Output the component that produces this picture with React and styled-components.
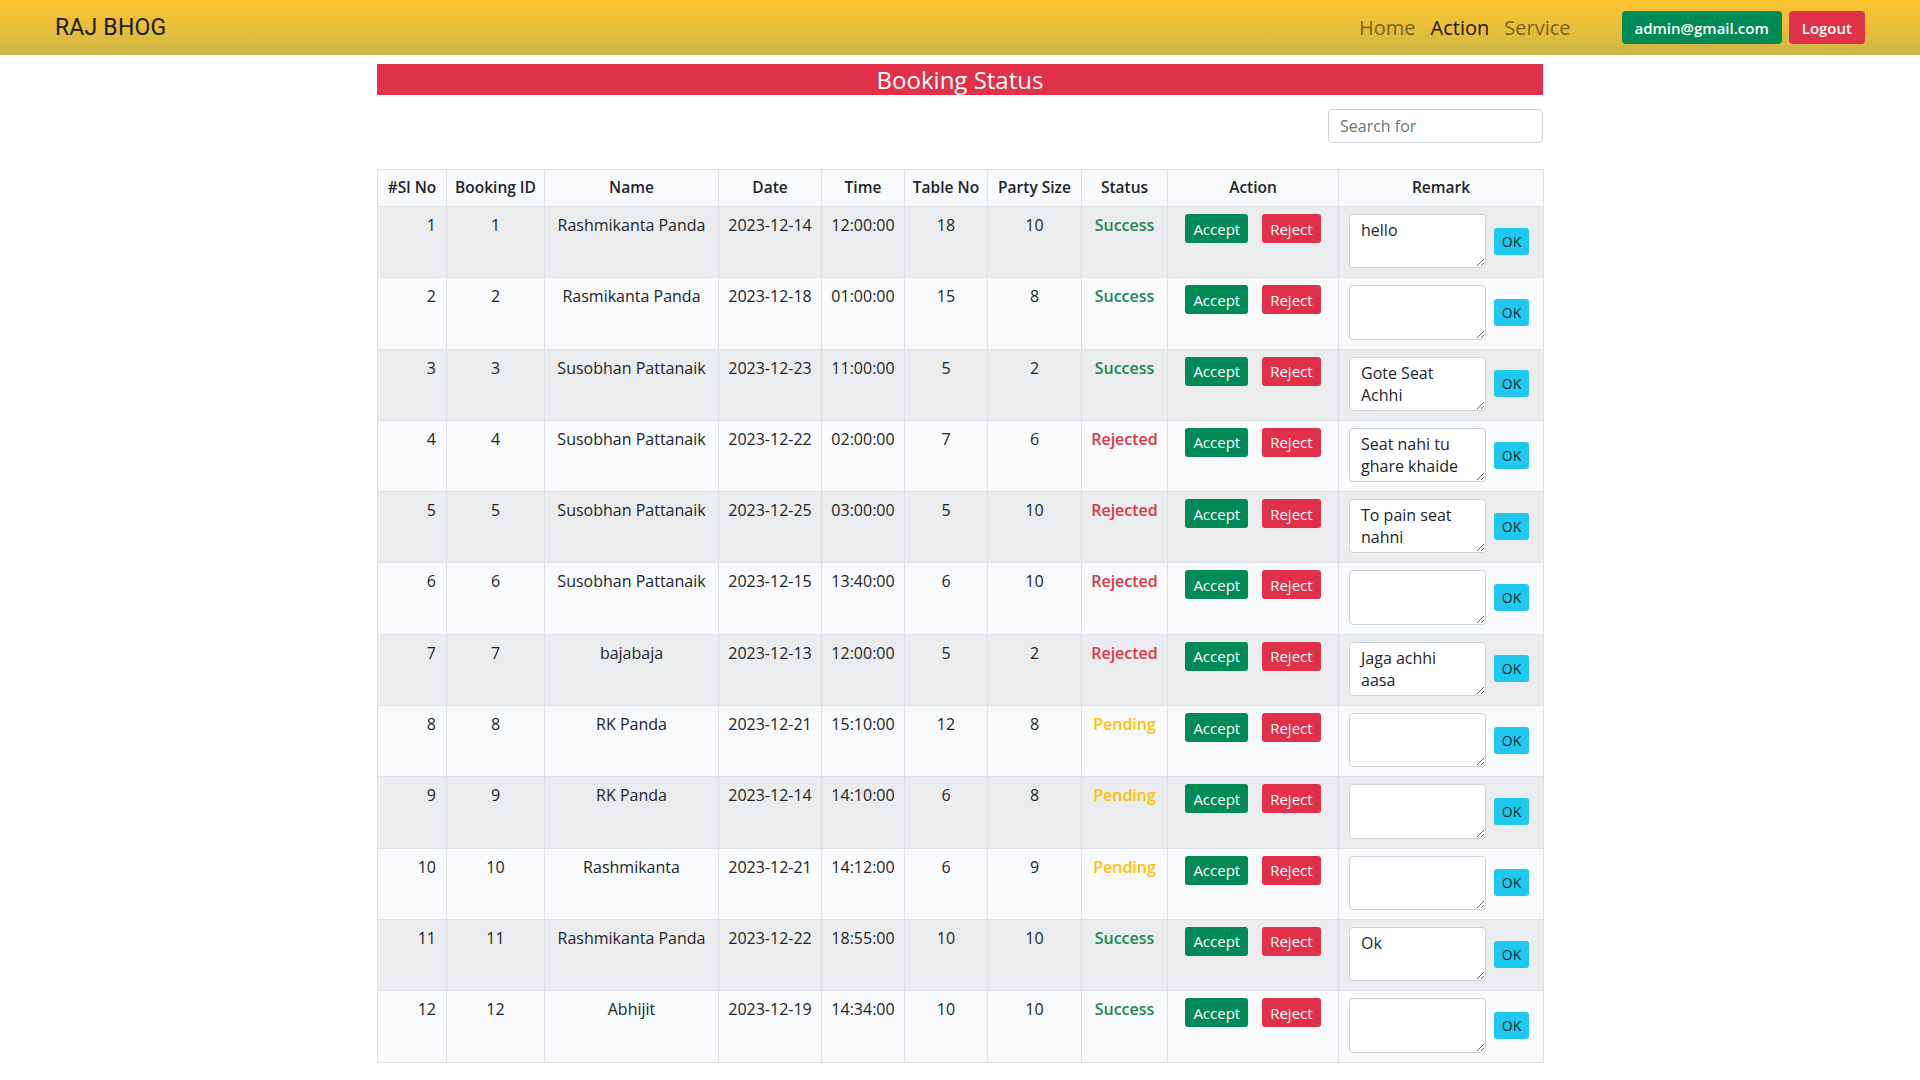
import React from "react";
import styled, { createGlobalStyle } from "styled-components";

const Global = createGlobalStyle`
  * { box-sizing: border-box; }
  body {
    margin: 0;
    font-family: "Open Sans", "Noto Sans", sans-serif;
    font-size: 16px;
    color: #212529;
    background: #fff;
  }
`;

const Navbar = styled.nav`
  height: 55px;
  padding: 0 55px;
  display: flex;
  align-items: center;
  background: linear-gradient(180deg, #fdc330 0%, #e6be3a 55%, #cbb846 100%);
`;

const Brand = styled.div`
  font-family: Roboto, "Liberation Sans", sans-serif;
  font-size: 23px;
  color: #1c1c1c;
  letter-spacing: 0.2px;
`;

const Spacer = styled.div`
  flex: 1;
`;

const NavLinks = styled.div`
  display: flex;
  gap: 15px;
  margin-right: 51px;
`;

const NavLink = styled.a`
  font-size: 20px;
  color: ${(p) => (p.$active ? "rgba(0,0,0,0.9)" : "rgba(0,0,0,0.5)")};
  text-decoration: none;
  cursor: pointer;
`;

const NavButtons = styled.div`
  display: flex;
  gap: 7px;
`;

const NavButton = styled.button`
  height: 33px;
  padding: 0 13px;
  border: none;
  border-radius: 4px;
  font-family: inherit;
  font-size: 15px;
  font-weight: 600;
  color: #fff;
  background: ${(p) => p.$bg};
  cursor: pointer;
`;

const Main = styled.main`
  width: 1166px;
  margin: 9px auto 0;
`;

const Banner = styled.h2`
  margin: 0;
  height: 31px;
  background: #e0304a;
  color: #fff;
  font-weight: 400;
  font-size: 24px;
  line-height: 31px;
  text-align: center;
`;

const SearchRow = styled.div`
  display: flex;
  justify-content: flex-end;
  padding: 14px 0 26px;
`;

const SearchInput = styled.input`
  width: 215px;
  height: 34px;
  padding: 0 11px;
  border: 1px solid #ced4da;
  border-radius: 4px;
  font-family: inherit;
  font-size: 16px;
  color: #212529;
  &::placeholder { color: #6c757d; }
`;

const Table = styled.table`
  width: 1166px;
  table-layout: fixed;
  border-collapse: collapse;
`;

const Col = styled.col`
  width: ${(p) => p.$w}px;
`;

const Th = styled.th`
  height: 37px;
  padding: 7px 4px 8px;
  border: 1px solid #dee2e6;
  background: #f8f9fa;
  font-weight: 600;
  font-size: 15.5px;
  line-height: 21px;
  text-align: center;
  white-space: nowrap;
`;

const Tr = styled.tr`
  background: ${(p) => (p.$odd ? "#ebeced" : "#f8f9fa")};
`;

const Td = styled.td`
  padding: 7px 8px 9px;
  padding-right: ${(p) => (p.$align === "right" ? "10px" : "8px")};
  border: 1px solid #dee2e6;
  vertical-align: top;
  text-align: ${(p) => p.$align || "center"};
  line-height: 22px;
  white-space: nowrap;
`;

const statusColors = {
  Success: "#198754",
  Rejected: "#dc3545",
  Pending: "#ffc107",
};

const Status = styled.span`
  font-weight: 600;
  color: ${(p) => statusColors[p.$status]};
`;

const ActionGroup = styled.div`
  display: flex;
  justify-content: center;
  gap: 14px;
`;

const SmallButton = styled.button`
  height: 29px;
  padding: 0 8px;
  border: none;
  border-radius: 3px;
  font-family: inherit;
  font-size: 15px;
  color: #fff;
  background: ${(p) => p.$bg};
  cursor: pointer;
`;

const RemarkGroup = styled.div`
  display: flex;
  align-items: center;
  gap: 8px;
  padding-left: 2px;
`;

const Remark = styled.textarea`
  display: block;
  width: 137px;
  height: 54.3px;
  padding: 4px 11px;
  border: 1px solid #ced4da;
  border-radius: 4px;
  font-family: inherit;
  font-size: 16px;
  line-height: 22px;
  color: #212529;
  background: #fff;
  resize: vertical;
  overflow: hidden;
  white-space: normal;
`;

const OkButton = styled.button`
  width: 35px;
  height: 27px;
  padding: 0;
  border: none;
  border-radius: 3px;
  background: #1fc8ee;
  color: #1a2a33;
  font-family: inherit;
  font-size: 14px;
  cursor: pointer;
`;

const widths = [69, 98, 174, 103, 83, 83, 94, 86, 171, 205];
const headers = [
  "#Sl No",
  "Booking ID",
  "Name",
  "Date",
  "Time",
  "Table No",
  "Party Size",
  "Status",
  "Action",
  "Remark",
];

const rows = [
  [1, "Rashmikanta Panda", "2023-12-14", "12:00:00", 18, 10, "Success", "hello"],
  [2, "Rasmikanta Panda", "2023-12-18", "01:00:00", 15, 8, "Success", ""],
  [3, "Susobhan Pattanaik", "2023-12-23", "11:00:00", 5, 2, "Success", "Gote Seat Achhi"],
  [4, "Susobhan Pattanaik", "2023-12-22", "02:00:00", 7, 6, "Rejected", "Seat nahi tu ghare khaide"],
  [5, "Susobhan Pattanaik", "2023-12-25", "03:00:00", 5, 10, "Rejected", "To pain seat nahni"],
  [6, "Susobhan Pattanaik", "2023-12-15", "13:40:00", 6, 10, "Rejected", ""],
  [7, "bajabaja", "2023-12-13", "12:00:00", 5, 2, "Rejected", "Jaga achhi aasa"],
  [8, "RK Panda", "2023-12-21", "15:10:00", 12, 8, "Pending", ""],
  [9, "RK Panda", "2023-12-14", "14:10:00", 6, 8, "Pending", ""],
  [10, "Rashmikanta", "2023-12-21", "14:12:00", 6, 9, "Pending", ""],
  [11, "Rashmikanta Panda", "2023-12-22", "18:55:00", 10, 10, "Success", "Ok"],
  [12, "Abhijit", "2023-12-19", "14:34:00", 10, 10, "Success", ""],
];

export default function App() {
  return (
    <>
      <Global />
      <Navbar>
        <Brand>RAJ BHOG</Brand>
        <Spacer />
        <NavLinks>
          <NavLink>Home</NavLink>
          <NavLink $active>Action</NavLink>
          <NavLink>Service</NavLink>
        </NavLinks>
        <NavButtons>
          <NavButton $bg="#008a57">admin@gmail.com</NavButton>
          <NavButton $bg="#e0304a">Logout</NavButton>
        </NavButtons>
      </Navbar>
      <Main>
        <Banner>Booking Status</Banner>
        <SearchRow>
          <SearchInput placeholder="Search for" />
        </SearchRow>
        <Table>
          <colgroup>
            {widths.map((w, i) => (
              <Col key={i} $w={w} />
            ))}
          </colgroup>
          <thead>
            <tr>
              {headers.map((h) => (
                <Th key={h}>{h}</Th>
              ))}
            </tr>
          </thead>
          <tbody>
            {rows.map(([id, name, date, time, table, party, status, remark], i) => (
              <Tr key={id} $odd={i % 2 === 0}>
                <Td $align="right">{id}</Td>
                <Td>{id}</Td>
                <Td>{name}</Td>
                <Td>{date}</Td>
                <Td>{time}</Td>
                <Td>{table}</Td>
                <Td>{party}</Td>
                <Td>
                  <Status $status={status}>{status}</Status>
                </Td>
                <Td>
                  <ActionGroup>
                    <SmallButton $bg="#008a57">Accept</SmallButton>
                    <SmallButton $bg="#e0304a">Reject</SmallButton>
                  </ActionGroup>
                </Td>
                <Td>
                  <RemarkGroup>
                    <Remark defaultValue={remark} />
                    <OkButton>OK</OkButton>
                  </RemarkGroup>
                </Td>
              </Tr>
            ))}
          </tbody>
        </Table>
      </Main>
    </>
  );
}
